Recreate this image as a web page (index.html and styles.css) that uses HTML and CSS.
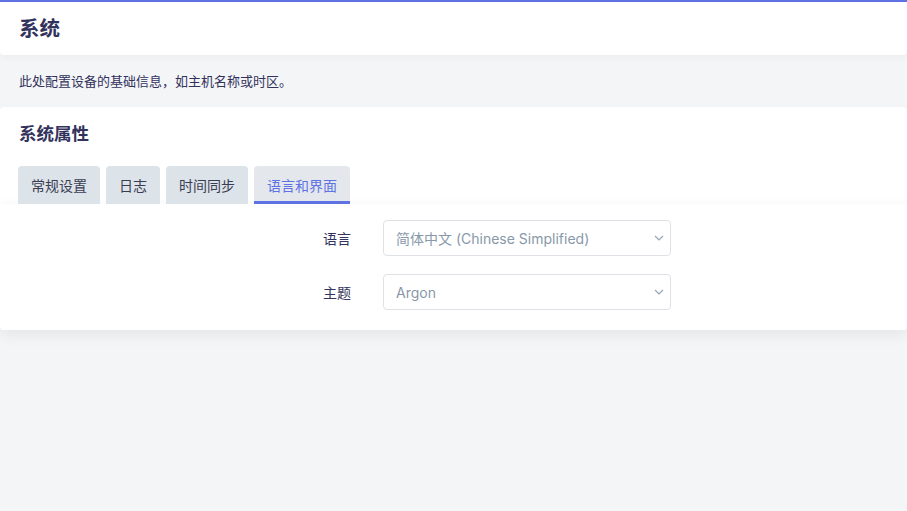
FILE: index.html
```html
<!DOCTYPE html>
<html lang="zh-CN">
<head>
  <meta charset="UTF-8">
  <meta name="viewport" content="width=device-width, initial-scale=1.0">
  <title>系统</title>
  <link rel="stylesheet" href="styles.css">
</head>
<body>
  <div class="header">
    <h2>系统</h2>
  </div>
  <p class="desc">此处配置设备的基础信息，如主机名称或时区。</p>

  <div class="card">
    <h3>系统属性</h3>
    <ul class="tabs">
      <li>常规设置</li>
      <li>日志</li>
      <li>时间同步</li>
      <li class="active">语言和界面</li>
    </ul>
    <div class="section">
      <div class="row">
        <label>语言</label>
        <div class="select">
          <span>简体中文 (Chinese Simplified)</span>
          <svg width="10" height="6" viewBox="0 0 10 6"><path d="M1 1l4 4 4-4" fill="none" stroke="#9aa3b5" stroke-width="1.2"/></svg>
        </div>
      </div>
      <div class="row">
        <label>主题</label>
        <div class="select">
          <span>Argon</span>
          <svg width="10" height="6" viewBox="0 0 10 6"><path d="M1 1l4 4 4-4" fill="none" stroke="#9aa3b5" stroke-width="1.2"/></svg>
        </div>
      </div>
    </div>
  </div>
</body>
</html>
```

FILE: styles.css
```css
*, *:before, *:after{
  padding: 0;
  margin: 0;
  box-sizing: border-box;
}
body{
  background: #f4f5f7;
  font-family: Inter, "Noto Sans CJK SC", sans-serif;
  color: #32325d;
  border-top: 2px solid #5e72e4;
  height: 100vh;
}
.header{
  background: #fff;
  height: 53px;
  padding: 0 19px 3px;
  display: flex;
  align-items: center;
  border-radius: 0 0 4px 4px;
  box-shadow: 0 2px 8px rgba(0,0,0,0.04);
}
.header h2{
  font-size: 20.5px;
  font-weight: 700;
}
.desc{
  font-size: 13px;
  padding: 16px 19px 0;
  height: 52px;
}
.card{
  background: #fff;
  border-radius: 4px;
  box-shadow: 0 6px 14px rgba(0,0,0,0.06);
}
.card h3{
  font-size: 17.5px;
  font-weight: 700;
  padding: 13px 19px 0;
  height: 59px;
}
.tabs{
  list-style: none;
  display: flex;
  gap: 6px;
  padding: 0 18px;
}
.tabs li{
  height: 38px;
  padding: 0 13px;
  display: flex;
  align-items: center;
  font-size: 14px;
  color: #3a3d52;
  background: #dce3e9;
  border-radius: 4px 4px 0 0;
}
.tabs li.active{
  background: #e4e8ed;
  color: #5e72e4;
  border-bottom: 3px solid #5e72e4;
  padding-top: 3px;
}
.section{
  background: #fff;
  padding: 16px 0 20px;
  box-shadow: 0 -3px 6px rgba(0,0,0,0.025);
  border-radius: 0 0 4px 4px;
  display: flex;
  flex-direction: column;
  gap: 18px;
}
.row{
  display: flex;
  align-items: center;
}
.row label{
  width: 351px;
  text-align: right;
  font-size: 14px;
  color: #32325d;
}
.select{
  margin-left: 32px;
  width: 288px;
  height: 36px;
  border: 1px solid #dee2e6;
  border-radius: 4px;
  display: flex;
  align-items: center;
  justify-content: space-between;
  padding: 0 6px 0 12px;
  font-size: 14px;
  color: #8898aa;
}
```
